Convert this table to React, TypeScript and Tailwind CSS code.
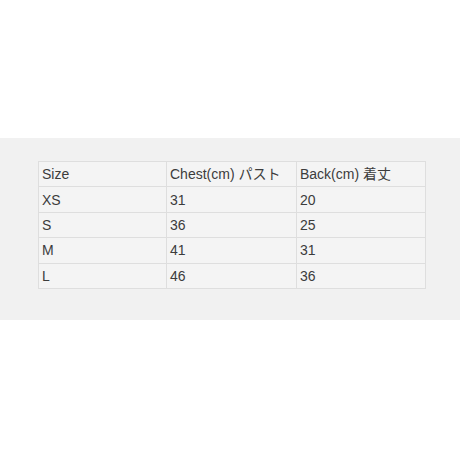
const rows = [
  ["Size", "Chest(cm) パスト", "Back(cm) 着丈"],
  ["XS", "31", "20"],
  ["S", "36", "25"],
  ["M", "41", "31"],
  ["L", "46", "36"],
];

export default function App() {
  return (
    <div className="h-[460px] w-[460px] bg-white pt-[138px] font-['Liberation_Sans','Noto_Sans_CJK_JP',sans-serif]">
      <div className="h-[182px] bg-[#f1f1f1] pl-[38px] pt-[23px]">
        <table className="w-[387px] table-fixed border-collapse bg-[#f4f4f4] text-[14px] text-[#3c3c3c]">
          <colgroup>
            <col className="w-[128px]" />
            <col className="w-[130px]" />
            <col className="w-[129px]" />
          </colgroup>
          <tbody>
            {rows.map((row, i) => (
              <tr key={i} className="h-[25.4px]">
                {row.map((cell, j) => (
                  <td key={j} className="border border-[#dedede] px-[3px] py-0 leading-none whitespace-nowrap">
                    {cell}
                  </td>
                ))}
              </tr>
            ))}
          </tbody>
        </table>
      </div>
    </div>
  );
}
